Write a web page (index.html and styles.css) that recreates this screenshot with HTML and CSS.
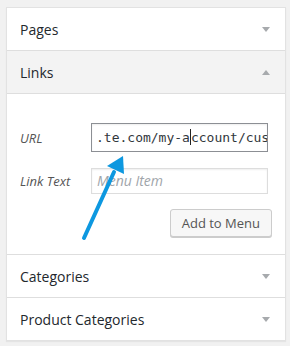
FILE: index.html
```html
<!DOCTYPE html>
<html>
<head>
<meta charset="utf-8">
<link rel="stylesheet" href="styles.css">
</head>
<body>
<div class="panel">
  <div class="section">
    <div class="head"><span class="title">Pages</span><span class="tri down"></span></div>
  </div>
  <div class="section open">
    <div class="head"><span class="title">Links</span><span class="tri up"></span></div>
    <div class="body">
      <div class="row url-row">
        <label class="lbl">URL</label>
        <div class="field url-field">.te.com/my-a<span class="caret"></span>ccount/cus</div>
      </div>
      <div class="row text-row">
        <label class="lbl">Link Text</label>
        <div class="field text-field"><span class="ph">Menu Item</span></div>
      </div>
      <div class="actions"><span class="btn">Add to Menu</span></div>
    </div>
  </div>
  <div class="section">
    <div class="head"><span class="title">Categories</span><span class="tri down"></span></div>
  </div>
  <div class="section">
    <div class="head"><span class="title">Product Categories</span><span class="tri down"></span></div>
  </div>
</div>
<svg class="pointer" width="290" height="346" viewBox="0 0 290 346">
  <line x1="84" y1="238" x2="114" y2="172" stroke="#0d98e0" stroke-width="4" stroke-linecap="round"/>
  <polygon points="123,156 107,166 124,174" fill="#0d98e0"/>
</svg>
</body>
</html>
```
FILE: styles.css
```css
html, body { margin: 0; padding: 0; }
body {
  background: #f1f1f1;
  width: 290px;
  height: 346px;
  overflow: hidden;
  position: relative;
  font-family: "Open Sans", "Liberation Sans", sans-serif;
}
.panel {
  margin: 7px 0 0 6px;
  width: 278px;
  border: 1px solid #e2e2e2;
  background: #fff;
  box-shadow: 0 1px 1px rgba(0,0,0,0.05);
}
.section + .section { border-top: 1px solid #dedede; }
.head {
  height: 42px;
  display: flex;
  align-items: center;
  justify-content: space-between;
  padding: 0 15px 0 13px;
  color: #23282d;
  font-size: 14px;
  font-weight: 500;
}
.open .head { background: #f3f3f3; border-bottom: 1px solid #dedede; }
.tri { width: 0; height: 0; border-left: 4px solid transparent; border-right: 4px solid transparent; }
.tri.down { border-top: 5px solid #a7aaad; }
.tri.up { border-bottom: 5px solid #a7aaad; }
.body { padding: 29px 14px 17px 13px; }
.row { display: flex; align-items: center; }
.lbl {
  width: 71px;
  font-style: italic;
  font-size: 13px;
  color: #555;
}
.field {
  width: 177px;
  border: 1px solid #ddd;
  box-sizing: border-box;
  box-shadow: inset 0 1px 2px rgba(0,0,0,0.07);
  overflow: hidden;
  white-space: nowrap;
}
.url-field {
  height: 29px;
  border-color: #8c8f94;
  padding: 0 0 0 4px;
  line-height: 27px;
  font-family: "DejaVu Sans Mono", "Liberation Mono", monospace;
  font-size: 13px;
  color: #32373c;
}
.caret { display: inline-block; width: 1px; height: 16px; background: #222; vertical-align: -3px; }
.text-row { margin-top: 16px; }
.text-field {
  height: 26px;
  line-height: 24px;
  padding-left: 5px;
  font-size: 14px;
}
.ph { color: #a0a5aa; font-style: italic; }
.actions { display: flex; justify-content: flex-end; margin-top: 15px; margin-right: -1px; }
.btn {
  display: inline-block;
  height: 26px;
  line-height: 26px;
  padding: 0 11px;
  font-size: 13px;
  color: #555;
  background: #f7f7f7;
  border: 1px solid #ccc;
  border-radius: 3px;
  box-shadow: 0 1px 0 #ccc;
}
.pointer { position: absolute; left: 0; top: 0; pointer-events: none; }
```
